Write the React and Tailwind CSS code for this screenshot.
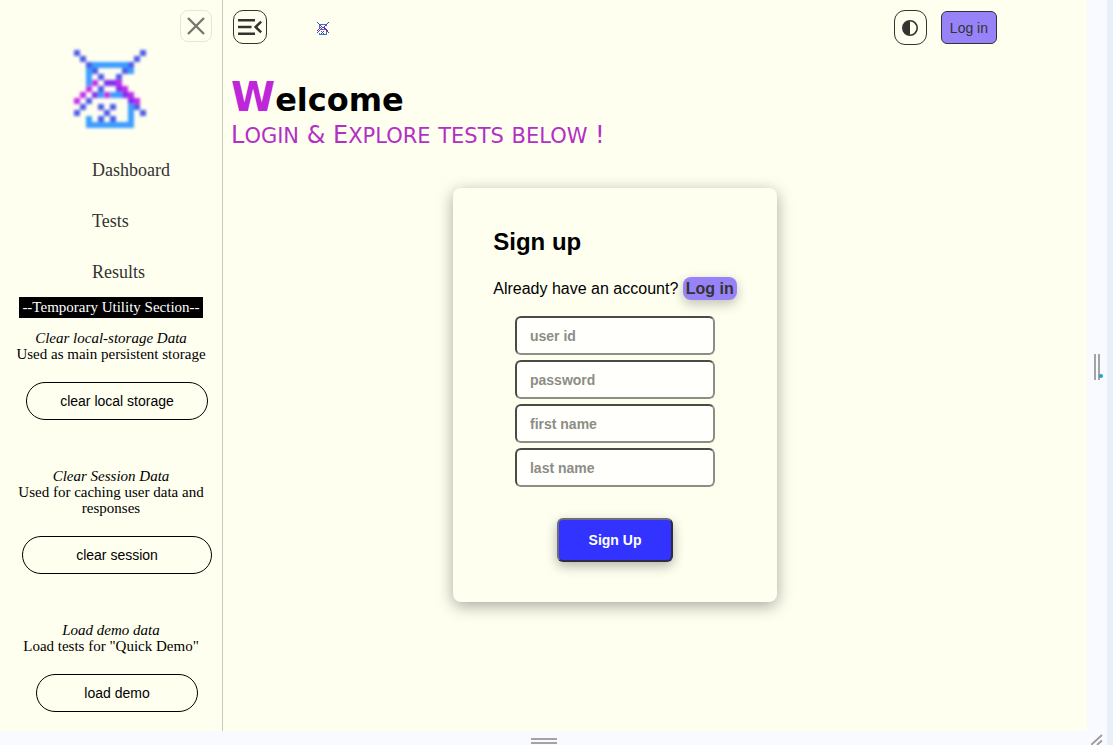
const LIGHT = "#3b9cff";
const BLUE = "#4a5ae8";
const PURPLE = "#7a2df0";
const PINK = "#c02bea";

const PIXELS = [
  [LIGHT, [[3, 2], [4, 2], [5, 2], [6, 2], [7, 2], [8, 2], [2, 3], [9, 3], [2, 4], [2, 5], [4, 7], [6, 7], [7, 7], [3, 7], [9, 8], [9, 9], [9, 10], [2, 11], [9, 11], [2, 12], [3, 12], [4, 12], [5, 12], [6, 12], [7, 12], [8, 12], [9, 12]]],
  [BLUE, [[0, 0], [11, 0], [1, 1], [10, 1], [2, 2], [9, 2], [3, 3], [8, 3], [4, 4], [7, 4], [4, 6], [2, 8], [1, 9], [4, 9], [6, 9], [10, 9], [0, 10], [5, 10], [11, 10], [4, 11], [6, 11]]],
  [PURPLE, [[5, 5], [6, 5], [7, 6], [3, 7], [8, 7], [9, 8]]],
  [PINK, [[3, 5], [7, 5], [2, 6], [8, 6], [1, 7], [5, 7], [9, 7], [0, 8], [10, 8]]],
];

function Logo({ className, soft }) {
  return (
    <svg viewBox="-1 -1 14 15" className={className} role="img" aria-label="Logo">
      <filter id="soften" x="-10%" y="-10%" width="120%" height="120%">
        <feGaussianBlur stdDeviation="0.3" />
      </filter>
      <g filter={soft ? "url(#soften)" : undefined} shapeRendering={soft ? undefined : "crispEdges"}>
        {PIXELS.map(([color, cells]) =>
          cells.map(([x, y]) => <rect key={`${color}${x}-${y}`} x={x} y={y} width="1" height="1" fill={color} />)
        )}
      </g>
    </svg>
  );
}

function Utility({ title, text, action, className }) {
  return (
    <section className="flex flex-col items-center text-center text-[15px] leading-4">
      <h2 className="italic">{title}</h2>
      <p>{text}</p>
      <button
        type="button"
        className={`mt-5 ml-3 h-[38px] rounded-full border border-black font-['Liberation_Sans',sans-serif] text-sm ${className}`}
      >
        {action}
      </button>
    </section>
  );
}

function Sidebar() {
  return (
    <aside className="flex w-[223px] shrink-0 flex-col border-r border-[#c9c9bd] px-2 pt-[10px] font-['Liberation_Serif',serif]">
      <button
        type="button"
        aria-label="Close menu"
        className="mr-[2px] flex size-8 items-center justify-center self-end rounded-lg border border-[#e6e6d8]"
      >
        <svg viewBox="0 0 18 18" className="size-[18px]" fill="none" stroke="#777770" strokeWidth="2.4">
          <path d="M1 1l16 16M17 1L1 17" />
        </svg>
      </button>
      <Logo soft className="mt-[2px] ml-[60px] h-[90px] w-[84px]" />
      <nav className="mt-6 flex flex-col gap-[27px] pl-[84px] text-lg leading-6 text-[#333330]">
        <a href="#dashboard">Dashboard</a>
        <a href="#tests">Tests</a>
        <a href="#results">Results</a>
      </nav>
      <p className="mt-[13px] self-center bg-black px-[3px] text-[15px] leading-[21px] text-white">
        --Temporary Utility Section--
      </p>
      <div className="mt-3 flex flex-col gap-12">
        <Utility title="Clear local-storage Data" text="Used as main persistent storage" action="clear local storage" className="px-[33px]" />
        <Utility title="Clear Session Data" text="Used for caching user data and responses" action="clear session" className="px-[53px]" />
        <Utility title="Load demo data" text={'Load tests for "Quick Demo"'} action="load demo" className="px-[47px]" />
      </div>
    </aside>
  );
}

function Field({ label, name, type = "text" }) {
  return (
    <input
      type={type}
      name={name}
      aria-label={label}
      placeholder={label}
      className="h-[39px] w-[200px] rounded-md border-2 border-t-[#4b4b46] border-r-[#8e8e86] border-b-[#8e8e86] border-l-[#4b4b46] bg-[#fffffb] px-[13px] text-sm font-bold placeholder:text-[#8d8d86]"
    />
  );
}

function SignUp() {
  return (
    <form className="mx-auto mt-10 flex flex-col rounded-lg bg-[#fffff0] p-10 shadow-[0_4px_16px_rgba(0,0,0,0.35)]">
      <h2 className="text-2xl leading-7 font-bold">Sign up</h2>
      <p className="mt-[21px] text-base leading-[23px]">
        Already have an account?{" "}
        <button type="button" className="rounded-lg bg-[#9783f7] px-[3px] font-bold text-[#333333] shadow-[0_4px_12px_rgba(0,0,0,0.25)]">
          Log in
        </button>
      </p>
      <div className="mt-4 flex flex-col items-center gap-[5px]">
        <Field label="user id" name="userId" />
        <Field label="password" name="password" type="password" />
        <Field label="first name" name="firstName" />
        <Field label="last name" name="lastName" />
      </div>
      <button
        type="submit"
        className="mt-[31px] h-11 self-center rounded-md border-2 border-t-[#6d6d7a] border-r-[#2d2d3d] border-b-[#2d2d3d] border-l-[#6d6d7a] bg-[#3333ff] px-[30px] text-sm font-bold text-white shadow-[0_4px_12px_rgba(0,0,0,0.3)]"
      >
        Sign Up
      </button>
    </form>
  );
}

function TopBar() {
  return (
    <header className="flex items-center px-[10px]">
      <button
        type="button"
        aria-label="Collapse menu"
        className="flex size-[34px] items-center justify-center self-start rounded-[10px] border border-[#333330]"
      >
        <svg viewBox="0 0 24 18" className="h-[18px] w-6" fill="none" stroke="#333330" strokeWidth="2.5">
          <path d="M0 2.2h17M0 9h13.5M0 15.800h17" />
          <path d="M23.200 3.600L17.600 9l5.600 5.400" />
        </svg>
      </button>
      <Logo className="mt-[2px] ml-[49px] h-[15px] w-[14px] brightness-80" />
      <button
        type="button"
        aria-label="Toggle theme"
        className="ml-auto flex h-[35px] w-[33px] items-center justify-center rounded-[11px] border border-[#333330]"
      >
        <svg viewBox="0 0 16 16" className="size-4">
          <circle cx="8" cy="8" r="7.200" fill="none" stroke="#333330" strokeWidth="1.600" />
          <path d="M8 1a7 7 0 0 0 0 14z" fill="#333330" />
        </svg>
      </button>
      <button
        type="button"
        className="ml-[14px] h-[33px] rounded-md border border-[#333333] bg-[#9783f7] px-2 text-sm text-[#333333]"
      >
        Log in
      </button>
    </header>
  );
}

function SmallCaps({ children }) {
  return <span className="text-[21px] leading-6 uppercase">{children}</span>;
}

export default function App() {
  return (
    <div className="flex min-h-screen border-r-[6px] border-[#e9eff9] bg-[#f8faff] font-['Liberation_Sans',sans-serif] text-black">
      <div className="flex min-w-0 grow flex-col">
        <div className="flex grow bg-[#fffff0]">
          <Sidebar />
          <main className="flex min-w-0 grow flex-col pt-[10px] pr-20">
            <TopBar />
            <h1 className="mt-[29px] pl-2 font-['DejaVu_Sans',sans-serif] text-[32px] leading-[46px] font-bold">
              <span className="text-[40px] text-[#c026d9]">W</span>elcome
            </h1>
            <p className="pl-2 font-['DejaVu_Sans',sans-serif] text-2xl leading-6 text-[#b32fc6]">
              L<SmallCaps>ogin</SmallCaps> &amp; E<SmallCaps>xplore</SmallCaps> <SmallCaps>tests</SmallCaps>{" "}
              <SmallCaps>below</SmallCaps> !
            </p>
            <SignUp />
          </main>
        </div>
        <div className="flex h-[14px] items-center justify-center pt-[6px]">
          <div className="h-[6px] w-[26px] border-y-2 border-[#a3a3a3]" />
        </div>
      </div>
      <div className="flex w-5 flex-col items-center">
        <div className="relative my-auto h-[26px] w-[6px] border-x-2 border-[#a3a3a3]">
          <span className="absolute -right-[5px] bottom-[2px] size-1 rounded-full bg-[#1ba5c4]" />
        </div>
        <svg viewBox="0 0 12 12" className="size-3" fill="none" stroke="#9a9a9a" strokeWidth="1.800">
          <path d="M0 12L11 2M6 12l5-4.500" />
        </svg>
      </div>
    </div>
  );
}
